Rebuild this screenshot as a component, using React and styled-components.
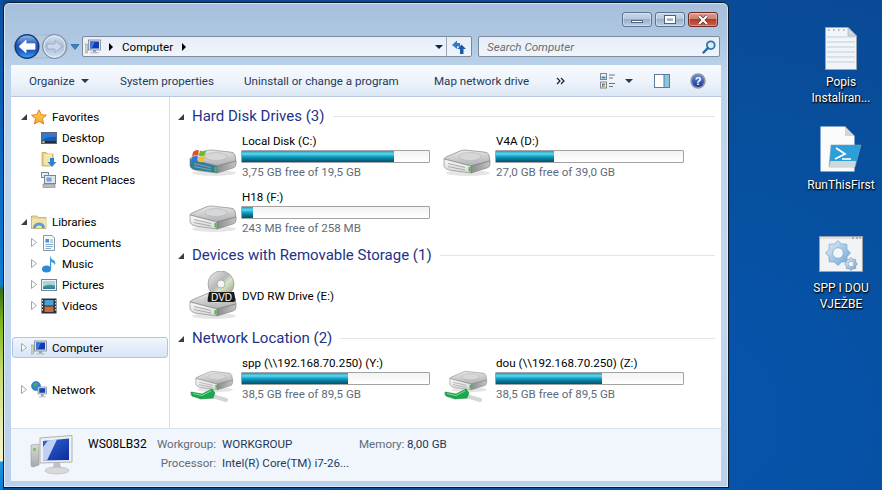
import React from "react";
import styled, { createGlobalStyle } from "styled-components";

const GlobalStyle = createGlobalStyle`
  html, body {
    margin: 0;
    padding: 0;
    height: 100%;
    overflow: hidden;
  }
  body {
    font-family: Roboto, "Noto Sans", sans-serif;
    font-size: 11.6px;
    color: #000;
  }
`;

const Desktop = styled.div`
  width: 882px;
  height: 490px;
  display: flex;
  align-items: flex-start;
  overflow: hidden;
  background:
    linear-gradient(to bottom, #0b4f9f 0, #0a6fc8 200px, #0a7fd4 285px, #356f1c 290px, #7cb518 322px, #c5dc6a 370px, #eef0c0 440px, #f5f2cc 461px, #1a96e0 462px, #0a7cd8 490px) left top / 3px 490px no-repeat,
    radial-gradient(ellipse at 70% 85%, #0655b0 0, #07509f 45%, #0b4690 100%);
`;

const Window = styled.div`
  box-sizing: border-box;
  width: 726px;
  height: 486px;
  margin: 2px 0 0 3px;
  padding: 0 7px 6px;
  display: flex;
  flex-direction: column;
  border: 1px solid #0c1a2c;
  border-radius: 6px 6px 0 0;
  background: linear-gradient(to bottom, #a6bfdc 0, #b0c8e2 40px, #bcd3ec 70px, #c2d7ee 300px, #b9d0ea 100%);
  box-shadow: inset 0 0 0 1px rgba(255, 255, 255, 0.55);
`;

const TitleBar = styled.div`
  display: flex;
  justify-content: flex-end;
  gap: 3px;
  padding: 9px 3px 0 0;
`;

const CaptionButton = styled.div`
  width: 30px;
  height: 15px;
  display: flex;
  align-items: center;
  justify-content: center;
  border: 1px solid ${(p) => (p.$close ? "#6e2a26" : "#5d7390")};
  box-sizing: border-box;
  border-radius: 3px;
  background: ${(p) =>
    p.$close
      ? "linear-gradient(to bottom, #dc9d90 0, #cf7f6f 45%, #b63a2a 50%, #c9604c 100%)"
      : "linear-gradient(to bottom, #c9d8e9 0, #b4c8de 45%, #96afcb 50%, #bcd0e6 100%)"};
  box-shadow: inset 0 0 0 1px rgba(255, 255, 255, 0.35);
`;

const MinGlyph = styled.span`
  width: 10px;
  height: 1px;
  margin-top: 4px;
  background: #fff;
  border: 1px solid #50627a;
`;

const MaxGlyph = styled.span`
  width: 6px;
  height: 3px;
  background: transparent;
  border: 2px solid #fff;
  outline: 1px solid #50627a;
`;

const NavRow = styled.div`
  display: flex;
  align-items: center;
  height: 27px;
  margin: 6px 0 5px;
  padding-left: 2px;
`;

const NavCluster = styled.div`
  width: 69px;
  height: 27px;
  flex: none;
`;

const AddressBar = styled.div`
  width: 390px;
  height: 21px;
  box-sizing: border-box;
  flex: none;
  display: flex;
  align-items: center;
  border: 1px solid #7b8a9c;
  border-radius: 2px;
  background: linear-gradient(to bottom, #e6eef8, #f1f5fb);
`;

const Crumbs = styled.div`
  flex: 1;
  display: flex;
  align-items: center;
  padding-left: 2px;
`;

const CrumbText = styled.span`
  margin: 0 9px 0 9px;
`;

const BlackArrow = styled.span`
  width: 0;
  height: 0;
  margin-left: ${(p) => p.$ml || 0}px;
  border-left: 4px solid #000;
  border-top: 4px solid transparent;
  border-bottom: 4px solid transparent;
`;

const DropArrow = styled.span`
  width: 0;
  height: 0;
  display: inline-block;
  flex: none;
  border-top: 4px solid ${(p) => p.$color || "#1e395b"};
  border-left: 4px solid transparent;
  border-right: 4px solid transparent;
`;

const AddressDrop = styled.div`
  width: 15px;
  display: flex;
  justify-content: center;
`;

const RefreshButton = styled.div`
  width: 24px;
  height: 19px;
  display: flex;
  align-items: center;
  justify-content: center;
  border-left: 1px solid #9aa9bb;
`;

const SearchBox = styled.div`
  width: 242px;
  height: 21px;
  box-sizing: border-box;
  margin-left: 6px;
  padding: 0 2px 0 8px;
  display: flex;
  align-items: center;
  justify-content: space-between;
  border: 1px solid #7b8a9c;
  border-radius: 2px;
  background: linear-gradient(to bottom, #e6eef8, #f1f5fb);
  font-style: italic;
  color: #6d6d6d;
`;

const Toolbar = styled.div`
  height: 32px;
  box-sizing: border-box;
  flex: none;
  display: flex;
  align-items: center;
  padding-left: 18px;
  border-bottom: 1px solid #b9cade;
  background: linear-gradient(to bottom, #f7fafd 0, #eef4fb 50%, #dbe7f4 100%);
  color: #1e395b;
`;

const ToolItem = styled.div`
  display: flex;
  align-items: center;
  gap: 6px;
  flex: none;
  width: ${(p) => p.$w}px;
  white-space: nowrap;
`;

const ToolIcon = styled.div`
  display: flex;
  align-items: center;
  gap: 9px;
  flex: none;
  width: ${(p) => p.$w}px;
`;

const Main = styled.div`
  flex: 1;
  min-height: 0;
  display: flex;
  background: #fff;
`;

const Sidebar = styled.nav`
  width: 159px;
  box-sizing: border-box;
  flex: none;
  padding-top: 9px;
  border-right: 1px solid #d5e0ec;
`;

const TreeGroup = styled.div`
  margin-bottom: 21px;
`;

const TreeRow = styled.div`
  height: 21px;
  box-sizing: border-box;
  display: flex;
  align-items: center;
  gap: 5px;
  margin: 0 1px;
  padding-left: ${(p) => p.$indent || 8}px;
  border: 1px solid ${(p) => (p.$selected ? "#a9c7e8" : "transparent")};
  border-radius: 3px;
  background: ${(p) => (p.$selected ? "linear-gradient(to bottom, #f1f6fd, #d6e5f6)" : "transparent")};
  white-space: nowrap;
`;

const Twisty = styled.span`
  width: 5px;
  height: 8px;
  flex: none;
  display: flex;
  align-items: center;
  justify-content: flex-start;
`;

const OpenTwisty = styled.span`
  width: 0;
  height: 0;
  margin-top: 1px;
  flex: none;
  border-bottom: 6px solid #3c3c3c;
  border-left: 6px solid transparent;
`;

const Content = styled.main`
  flex: 1;
  min-width: 0;
  padding: 9px 6px 0 8px;
`;

const GroupHeader = styled.div`
  height: 20px;
  display: flex;
  align-items: center;
  gap: 8px;
`;

const GroupTitle = styled.span`
  margin-left: 1px;
  font-size: 15px;
  color: #1e3287;
  white-space: nowrap;
`;

const GroupRule = styled.span`
  flex: 1;
  height: 1px;
  background: #e2e6ec;
`;

const Tiles = styled.div`
  display: grid;
  grid-template-columns: 254px 254px;
  grid-auto-rows: 56px;
  margin-left: 11px;
  padding-top: 7px;
`;

const Tile = styled.div`
  display: flex;
  align-items: ${(p) => (p.$center ? "center" : "flex-start")};
  height: ${(p) => (p.$center ? 48 : 56)}px;
`;

const TileIcon = styled.div`
  width: 52px;
  flex: none;
  padding-top: ${(p) => (p.$center ? 0 : 14)}px;
`;

const TileInfo = styled.div`
  width: 189px;
`;

const TileName = styled.div`
  height: 16px;
  line-height: 16px;
  padding-left: 1px;
  white-space: nowrap;
`;

const Meter = styled.div`
  height: 13px;
  box-sizing: border-box;
  margin-top: 1px;
  border: 1px solid #a3a3a3;
  border-radius: 1px;
  background: linear-gradient(to bottom, #f3f3f3, #fff);
`;

const MeterFill = styled.div`
  height: 100%;
  background: linear-gradient(to bottom, #1b9dbf 0, #62d4ee 25%, #14a2c2 50%, #04789a 72%, #0a4f70 100%);
`;

const TileFree = styled.div`
  height: 18px;
  line-height: 18px;
  padding-left: 1px;
  color: #5f6b78;
  white-space: nowrap;
`;

const Details = styled.footer`
  height: 53px;
  box-sizing: border-box;
  flex: none;
  display: flex;
  padding: 5px 0 0 19px;
  border-top: 1px solid #d4e0ee;
  background: #f1f5fc;
`;

const DetailsIcon = styled.div`
  width: 58px;
  flex: none;
  padding-top: 1px;
`;

const DetailsGrid = styled.div`
  display: grid;
  grid-template-columns: 66px 68px 137px 48px auto;
  grid-auto-rows: 19px;
  align-items: center;
  white-space: nowrap;
`;

const DetailName = styled.span`
  font-size: 12px;
  color: #000;
`;

const DetailLabel = styled.span`
  color: #5f6b78;
  justify-self: ${(p) => (p.$end ? "end" : "start")};
  padding-right: ${(p) => (p.$end ? 6 : 0)}px;
`;

const DetailValue = styled.span`
  color: #1e395b;
  grid-column: ${(p) => p.$span || "auto"};
`;

const DesktopIcons = styled.div`
  width: 80px;
  margin-left: 72px;
  padding-top: 27px;
  display: flex;
  flex-direction: column;
  align-items: center;
`;

const Shortcut = styled.div`
  width: 80px;
  height: ${(p) => p.$h}px;
  display: flex;
  flex-direction: column;
  align-items: center;
`;

const ShortcutLabel = styled.div`
  margin-top: ${(p) => p.$gap}px;
  font-size: 12px;
  line-height: 16px;
  text-align: center;
  color: #fff;
  white-space: pre-line;
  text-shadow: 0 1px 2px #000, 1px 1px 1px rgba(0, 0, 0, 0.8);
`;

// ---- icons ----

const NavButtons = () => (
  <svg width="69" height="27" viewBox="0 0 69 27">
    <defs>
      <linearGradient id="backFill" x1="0" y1="0" x2="0" y2="1">
        <stop offset="0" stopColor="#8fb4ea" />
        <stop offset="0.45" stopColor="#1c52b6" />
        <stop offset="0.7" stopColor="#1a5cc4" />
        <stop offset="1" stopColor="#37a0f0" />
      </linearGradient>
      <linearGradient id="fwdFill" x1="0" y1="0" x2="0" y2="1">
        <stop offset="0" stopColor="#d4e0ee" />
        <stop offset="0.5" stopColor="#a9bfda" />
        <stop offset="1" stopColor="#cfe0f2" />
      </linearGradient>
    </defs>
    <rect x="1" y="2" width="54" height="23" rx="11.5" fill="#b7c9df" stroke="#93a9c5" strokeWidth="0.5" />
    <circle cx="14" cy="13.5" r="12.5" fill="#123a78" />
    <circle cx="14" cy="13.5" r="11" fill="url(#backFill)" />
    <path d="M6 13.5 L13 7.2 V10.8 H22 V16.2 H13 V19.8 Z" fill="#fff" stroke="#fff" strokeWidth="0.8" strokeLinejoin="round" />
    <circle cx="41.5" cy="13.5" r="12" fill="url(#fwdFill)" stroke="#74859c" />
    <circle cx="41.5" cy="13.5" r="10.5" fill="none" stroke="#e8f0f8" strokeWidth="0.8" />
    <path d="M49 13.5 L42 7.5 V11 H34 V16 H42 V19.5 Z" fill="#ccd9e8" stroke="#93a6bd" strokeWidth="0.8" strokeLinejoin="round" />
    <path d="M58 11.5 H66 L62 16.5 Z" fill="#2a8ad0" stroke="#1d4f86" strokeWidth="0.6" />
  </svg>
);

const ClosedTriangle = () => (
  <svg width="6" height="9" viewBox="0 0 6 9" style={{ flex: "none" }}>
    <path d="M0.5 0.5 L5.5 4.5 L0.5 8.5 Z" fill="#fff" stroke="#a3a3a3" />
  </svg>
);

const ComputerIcon = () => (
  <svg width="16" height="16" viewBox="0 0 16 16" style={{ flex: "none" }}>
    <rect x="0" y="5" width="2.5" height="9" fill="#cfd6b8" stroke="#8b8f80" strokeWidth="0.5" />
    <rect x="3.5" y="1" width="12" height="10" fill="#dfe3e8" stroke="#7d8794" strokeWidth="0.8" />
    <rect x="5" y="2.5" width="9" height="7" fill="#0d3bb4" />
    <path d="M5 2.5 H10 L7 9.5 H5 Z" fill="#3f74dc" />
    <rect x="8" y="11" width="3" height="2" fill="#9aa3ad" />
    <rect x="5.5" y="13" width="8" height="1.5" fill="#bcc3cb" />
  </svg>
);

const RefreshIcon = () => (
  <svg width="16" height="16" viewBox="0 0 16 16">
    <path d="M1 6 L6 1.5 V4 H9 V7.5 H6 V10 Z" fill="#3b79c4" />
    <path d="M15 10 L10.5 5.5 L6.5 10 H9 V15 H12.5 V10 Z" fill="#1d5aa8" />
  </svg>
);

const SearchIcon = () => (
  <svg width="16" height="16" viewBox="0 0 16 16">
    <circle cx="9.8" cy="6.2" r="3.9" fill="#dcebf8" stroke="#2e73b4" strokeWidth="1.8" />
    <path d="M7 9 L2.5 13.5" stroke="#2466aa" strokeWidth="2.4" strokeLinecap="round" />
  </svg>
);

const ViewsIcon = () => (
  <svg width="16" height="16" viewBox="0 0 16 16" style={{ flex: "none" }}>
    <rect x="0.5" y="0.5" width="6" height="6" fill="#eef4fa" stroke="#7c8794" />
    <rect x="1.5" y="3.5" width="4" height="2" fill="#2e8f9e" />
    <rect x="0.5" y="9" width="6" height="6" fill="#eef4fa" stroke="#7c8794" />
    <rect x="2" y="10.5" width="1.6" height="1.6" fill="#d23b2c" />
    <rect x="3.6" y="10.5" width="1.6" height="1.6" fill="#4ba83c" />
    <rect x="2" y="12.2" width="1.6" height="1.6" fill="#2d64c8" />
    <rect x="3.6" y="12.2" width="1.6" height="1.6" fill="#e6b52c" />
    <path d="M9 2 H15 M9 5 H13 M9 10.5 H15 M9 13.5 H13" stroke="#6b7684" strokeWidth="1" />
  </svg>
);

const PaneIcon = () => (
  <svg width="16" height="14" viewBox="0 0 16 14">
    <rect x="0.5" y="0.5" width="15" height="13" fill="#fff" stroke="#5f7b96" />
    <rect x="10" y="1" width="5" height="12" fill="#8cc6e0" />
    <rect x="9.5" y="1" width="1" height="12" fill="#5f7b96" />
  </svg>
);

const HelpIcon = () => (
  <svg width="16" height="16" viewBox="0 0 16 16">
    <defs>
      <linearGradient id="helpFill" x1="0" y1="0" x2="0" y2="1">
        <stop offset="0" stopColor="#5f88dc" />
        <stop offset="1" stopColor="#17359c" />
      </linearGradient>
    </defs>
    <circle cx="8" cy="8" r="7.7" fill="#8d96a6" />
    <circle cx="8" cy="8" r="6" fill="url(#helpFill)" />
    <text x="8" y="12" textAnchor="middle" fontSize="11" fontWeight="700" fontFamily="Liberation Sans, sans-serif" fill="#fff">?</text>
  </svg>
);

const StarIcon = () => (
  <svg width="16" height="16" viewBox="0 0 16 16" style={{ flex: "none" }}>
    <defs>
      <linearGradient id="starFill" x1="0" y1="0" x2="0" y2="1">
        <stop offset="0" stopColor="#ffd94e" />
        <stop offset="1" stopColor="#f7a72a" />
      </linearGradient>
    </defs>
    <path d="M8 0.8 L10.2 5.6 L15.4 6.2 L11.5 9.7 L12.6 15 L8 12.3 L3.4 15 L4.5 9.7 L0.6 6.2 L5.8 5.6 Z" fill="url(#starFill)" stroke="#d9782a" strokeWidth="0.9" strokeLinejoin="round" />
  </svg>
);

const DesktopIcon = () => (
  <svg width="16" height="16" viewBox="0 0 16 16" style={{ flex: "none" }}>
    <rect x="0.5" y="2.5" width="15" height="11" fill="#1f5aa8" stroke="#59687a" />
    <path d="M1 3 H15 V7 Q8 6 1 10 Z" fill="#2f7ad0" />
    <rect x="1" y="11" width="14" height="2" fill="#26303c" />
    <rect x="1.5" y="11" width="2" height="2" fill="#d9d24a" />
  </svg>
);

const DownloadsIcon = () => (
  <svg width="16" height="16" viewBox="0 0 16 16" style={{ flex: "none" }}>
    <path d="M1 1.5 H5 L7 3 H12 V15 H1 Z" fill="#e9cf7c" stroke="#b8a05a" strokeWidth="0.7" />
    <rect x="3" y="3" width="8" height="11" fill="#f5e6ae" />
    <path d="M9 7 H13 V11 H15.5 L11 15.8 L6.5 11 H9 Z" fill="#2c7fd4" />
  </svg>
);

const RecentIcon = () => (
  <svg width="16" height="16" viewBox="0 0 16 16" style={{ flex: "none" }}>
    <rect x="0.5" y="0.5" width="7" height="5" fill="#e8ecf0" stroke="#7b8592" />
    <rect x="3.5" y="3.5" width="11" height="8" fill="#dfe5ea" stroke="#7b8592" />
    <rect x="5.5" y="5.5" width="5" height="4" fill="#6ea4d8" />
    <rect x="2" y="12" width="12" height="3.5" fill="#b6bdc4" stroke="#7b8592" strokeWidth="0.6" />
  </svg>
);

const LibraryIcon = () => (
  <svg width="16" height="16" viewBox="0 0 16 16" style={{ flex: "none" }}>
    <path d="M0.5 2 H6 L7.5 3.5 H15 V14.5 H0.5 Z" fill="#ead692" stroke="#b39e62" strokeWidth="0.7" />
    <rect x="1" y="5" width="14" height="9" fill="#f3e4ae" />
    <path d="M2 14 Q2 9 8 8.5 Q14 9 14 14 H11 Q11 11.5 8 11.5 Q5 11.5 5 14 Z" fill="#5a9fd2" />
  </svg>
);

const DocumentsIcon = () => (
  <svg width="16" height="16" viewBox="0 0 16 16" style={{ flex: "none" }}>
    <path d="M2.5 0.5 H11 L13.5 3 V15.5 H2.5 Z" fill="#f5f8fb" stroke="#8b97a4" />
    <rect x="4.5" y="4" width="3.5" height="3.5" fill="#4d8ed0" />
    <path d="M9 5 H12 M9 7 H12 M4.5 9.5 H12 M4.5 11.5 H12 M4.5 13.5 H10" stroke="#7ea4c8" strokeWidth="0.9" />
  </svg>
);

const MusicIcon = () => (
  <svg width="16" height="18" viewBox="0 0 16 18" style={{ flex: "none" }}>
    <ellipse cx="5.5" cy="14" rx="4.5" ry="3.5" fill="#2c8ad6" />
    <path d="M9 14 V1 Q10 4 13 5.5 Q15 7 14 10 Q13 7.5 10.2 7 V14 Z" fill="#3f9be0" />
  </svg>
);

const PicturesIcon = () => (
  <svg width="16" height="16" viewBox="0 0 16 16" style={{ flex: "none" }}>
    <rect x="0.5" y="2.5" width="15" height="11" fill="#f0f3f6" stroke="#7b8592" />
    <rect x="2" y="4" width="12" height="8" fill="#a8d4ea" />
    <path d="M2 9.5 Q7 6.5 14 8.5 V12 H2 Z" fill="#3f9a84" />
    <rect x="2" y="10.5" width="12" height="1.5" fill="#2f7ea4" />
  </svg>
);

const VideosIcon = () => (
  <svg width="16" height="16" viewBox="0 0 16 16" style={{ flex: "none" }}>
    <rect x="0.5" y="0.5" width="15" height="15" fill="#28323c" />
    <rect x="3.5" y="2" width="9" height="5.5" fill="#4aa0d8" />
    <rect x="3.5" y="8.5" width="9" height="5.5" fill="#c96a3a" />
    <path d="M1.5 2 V14 M14.5 2 V14" stroke="#cfd6dc" strokeWidth="1.2" strokeDasharray="1.4 1.6" />
  </svg>
);

const NetworkIcon = () => (
  <svg width="16" height="17" viewBox="0 0 16 17" style={{ flex: "none" }}>
    <circle cx="5" cy="5" r="4.5" fill="#2e86d8" stroke="#1a5a9c" strokeWidth="0.5" />
    <path d="M2.2 3 Q4 1 6 2 L5.5 4.5 L3 6 Z M6 6 L8.5 6 L7 9 Z" fill="#4fb04a" />
    <rect x="7" y="6" width="8.5" height="7" fill="#e3e7eb" stroke="#7d8794" strokeWidth="0.7" />
    <rect x="8.2" y="7.2" width="6" height="4.6" fill="#1542b4" />
    <rect x="10" y="13" width="2.5" height="2" fill="#9aa3ad" />
    <rect x="8" y="15" width="6.5" height="1.4" fill="#bcc3cb" />
  </svg>
);

const DriveBody = ({ id, x = 0, y = 0, scale = 1, front }) => (
  <g transform={`translate(${x} ${y}) scale(${scale})`}>
    <defs>
      <linearGradient id={`${id}Top`} x1="0" y1="0" x2="0.2" y2="1">
        <stop offset="0" stopColor="#ececec" />
        <stop offset="1" stopColor="#b4b5b6" />
      </linearGradient>
      <linearGradient id={`${id}Front`} x1="0" y1="0" x2="0" y2="1">
        <stop offset="0" stopColor="#fafafa" />
        <stop offset="1" stopColor="#d6d7d8" />
      </linearGradient>
      <linearGradient id={`${id}Side`} x1="0" y1="0" x2="1" y2="0">
        <stop offset="0" stopColor="#8a8b8c" />
        <stop offset="1" stopColor="#c2c3c4" />
      </linearGradient>
    </defs>
    <ellipse cx="25" cy="26" rx="22" ry="3" fill="#000" opacity="0.1" />
    <path d="M1 12 Q1 11 3 10 L17 4 Q19 3 22 3 L41 5 Q45 5 46 8 L47 14 L28 19 Z" fill={`url(#${id}Top)`} stroke="#77787a" strokeWidth="0.6" strokeLinejoin="round" />
    <ellipse cx="27" cy="9.5" rx="11" ry="4" fill="#d6d7d8" stroke="#a9aaab" strokeWidth="0.4" />
    <path d="M1 12 L28 19 V26 L6 23 Q2 22 1 19 Z" fill={front || `url(#${id}Front)`} stroke="#7c7d80" strokeWidth="0.6" strokeLinejoin="round" />
    <path d="M28 19 L47 14 V17 Q47 20 44 21 L28 26 Z" fill={`url(#${id}Side)`} stroke="#77787a" strokeWidth="0.6" strokeLinejoin="round" />
    <path d="M5 16.5 L22 20.5 M5 19.5 L22 23" stroke="#a2a3a4" strokeWidth="0.9" />
    <rect x="25.5" y="20" width="2" height="4.5" fill="#4cc23a" />
  </g>
);

const WinBadge = () => (
  <g transform="translate(2 -7)">
    <path d="M2 12 Q5 9 8 10.5 L7 15.5 Q4 14 1 16.5 Z" fill="#e2522a" />
    <path d="M9 10.5 Q12 12 15 10 L14 15 Q11 17 8 15.5 Z" fill="#6cb82e" />
    <path d="M1 17.5 Q4 15 7 16.5 L6 21.5 Q3 20 0 22.5 Z" fill="#2e7ad8" />
    <path d="M8 16.5 Q11 18 14 16 L13 21 Q10 23 7 21.5 Z" fill="#f0bf2a" />
  </g>
);

const SystemDrive = () => (
  <svg width="48" height="32" viewBox="0 0 48 32">
    <DriveBody id="cDrive" front="#2b7f9e" />
    <WinBadge />
  </svg>
);

const PlainDrive = ({ id }) => (
  <svg width="48" height="32" viewBox="0 0 48 32">
    <DriveBody id={id} />
  </svg>
);

const DvdDrive = () => (
  <svg width="48" height="48" viewBox="0 0 48 48">
    <defs>
      <linearGradient id="discFill" x1="0" y1="0" x2="1" y2="1">
        <stop offset="0" stopColor="#eeeeee" />
        <stop offset="0.45" stopColor="#b7b7b7" />
        <stop offset="0.6" stopColor="#d6e6c4" />
        <stop offset="1" stopColor="#8c8c8c" />
      </linearGradient>
    </defs>
    <DriveBody id="dvdDrive" y={19} />
    <circle cx="32" cy="13" r="13" fill="url(#discFill)" stroke="#8a8a8a" strokeWidth="0.6" />
    <circle cx="32" cy="13" r="4" fill="#f4f4f4" stroke="#8a8a8a" strokeWidth="0.6" />
    <path d="M20 21 H45 L46.5 29 Q46.5 31 44 31 L20 31 Q18.5 31 18.5 29 Z" fill="#1a1a1a" />
    <text x="32.5" y="30" textAnchor="middle" fontSize="10" fontFamily="Liberation Sans, sans-serif" fill="#fff">DVD</text>
  </svg>
);

const NetDrive = ({ id }) => (
  <svg width="48" height="36" viewBox="0 0 48 36">
    <DriveBody id={id} x={6} y={0} scale={0.8} />
    <path d="M3 25 L14 27 L27 28 L37 31" stroke="#cfd8d2" strokeWidth="4" strokeLinecap="round" fill="none" />
    <path d="M2 23 L13 25 L23 20 L26 24 L24 29 L12 30 L3 27 Z" fill="#1ba94e" stroke="#0f7a38" strokeWidth="0.5" />
    <path d="M4 24.5 L13 26.5 L22 22" stroke="#7be08f" strokeWidth="1" fill="none" />
  </svg>
);

const LargeComputer = () => (
  <svg width="44" height="40" viewBox="0 0 44 40">
    <defs>
      <linearGradient id="pcScreen" x1="0" y1="0" x2="1" y2="1">
        <stop offset="0" stopColor="#3168d8" />
        <stop offset="1" stopColor="#0a2a9c" />
      </linearGradient>
      <linearGradient id="pcTower" x1="0" y1="0" x2="0" y2="1">
        <stop offset="0" stopColor="#d9dadb" />
        <stop offset="1" stopColor="#a6a8aa" />
      </linearGradient>
    </defs>
    <path d="M1 10 L9 9 V30 L3 32 Q1 32 1 30 Z" fill="url(#pcTower)" stroke="#8e9092" strokeWidth="0.5" />
    <rect x="3" y="13" width="3" height="3" fill="#8bc65a" />
    <path d="M10 3 L42 0.5 V27 L10 28 Z" fill="#eef0f2" stroke="#9ea1a4" strokeWidth="0.8" />
    <path d="M13 6 L39 3.5 V25 L13 25.5 Z" fill="url(#pcScreen)" />
    <path d="M18 5.5 L27 4.6 L17 25.4 H13 V12 Z" fill="#dbe6fb" opacity="0.85" />
    <path d="M24 28 H30 L31 33 H23 Z" fill="#bfc2c5" />
    <ellipse cx="27" cy="35.5" rx="12" ry="3.5" fill="#d7d9db" stroke="#a8abad" strokeWidth="0.5" />
  </svg>
);

const TextFileIcon = () => (
  <svg width="32" height="43" viewBox="0 0 32 43">
    <path d="M0.5 0.5 H23 L31.5 9 V42.5 H0.5 Z" fill="#f1f4f8" stroke="#9aa3ae" />
    <path d="M23 0.5 V9 H31.5 Z" fill="#d4d9df" stroke="#9aa3ae" strokeWidth="0.6" />
    <path d="M3 3 H22" stroke="#a2a8b0" strokeWidth="1.6" strokeDasharray="1.6 3.4" />
    <path d="M2 10 H30 M2 15 H30 M2 20 H30 M2 25 H30 M2 30 H30 M2 35 H30" stroke="#c3cddc" strokeWidth="1" />
  </svg>
);

const PowerShellIcon = () => (
  <svg width="42" height="46" viewBox="0 0 42 46">
    <path d="M0.5 0.5 H25 L34.5 10 V45.5 H0.5 Z" fill="#fbfbfb" />
    <path d="M25 0.5 V10 H34.5 Z" fill="#d3d5d8" />
    <path d="M11 19 H41 L35 41 H9 Z" fill="#2c9fd8" stroke="#8ba0b0" strokeWidth="0.6" />
    <path d="M10.5 35 H36 L35 41 H9 Z" fill="#cfd7de" />
    <path d="M16 22 L25 28 L15 33" stroke="#fff" strokeWidth="1.8" fill="none" />
    <path d="M22 33 H31" stroke="#fff" strokeWidth="1.6" />
  </svg>
);

const GearPath = ({ cx, cy, r, fill }) => {
  const pts = [];
  for (let i = 0; i < 16; i++) {
    const a = (i / 16) * Math.PI * 2;
    const rad = i % 2 === 0 ? r : r * 0.78;
    pts.push(`${(cx + Math.cos(a) * rad).toFixed(1)},${(cy + Math.sin(a) * rad).toFixed(1)}`);
  }
  return (
    <g>
      <polygon points={pts.join(" ")} fill={fill} stroke="#6d93b8" strokeWidth="0.6" strokeLinejoin="round" />
      <circle cx={cx} cy={cy} r={r * 0.42} fill="#f4f6f8" stroke="#7d9cba" strokeWidth="0.6" />
    </g>
  );
};

const GearAppIcon = () => (
  <svg width="44" height="36" viewBox="0 0 44 36">
    <defs>
      <linearGradient id="gearFill" x1="0" y1="0" x2="1" y2="1">
        <stop offset="0" stopColor="#e3f0fb" />
        <stop offset="1" stopColor="#6ea3d6" />
      </linearGradient>
    </defs>
    <rect x="0.5" y="0.5" width="43" height="35" fill="#f2f3f4" stroke="#9aa0a6" />
    <rect x="1" y="1" width="42" height="2" fill="#dfe2e5" />
    <path d="M33 2 H35 M37 2 H39 M40.5 2 H42" stroke="#777" strokeWidth="1" />
    <GearPath cx={19} cy={17} r={12.5} fill="url(#gearFill)" />
    <GearPath cx={32} cy={28} r={6.5} fill="url(#gearFill)" />
  </svg>
);

const Twist = ({ open }) => <Twisty>{open ? <OpenTwisty /> : <ClosedTriangle />}</Twisty>;

const favorites = [
  ["Desktop", <DesktopIcon key="d" />],
  ["Downloads", <DownloadsIcon key="dl" />],
  ["Recent Places", <RecentIcon key="r" />],
];

const libraries = [
  ["Documents", <DocumentsIcon key="doc" />],
  ["Music", <MusicIcon key="m" />],
  ["Pictures", <PicturesIcon key="p" />],
  ["Videos", <VideosIcon key="v" />],
];

const DriveTile = ({ icon, name, free, used }) => (
  <Tile>
    <TileIcon>{icon}</TileIcon>
    <TileInfo>
      <TileName>{name}</TileName>
      <Meter>
        <MeterFill style={{ width: `${used}%` }} />
      </Meter>
      <TileFree>{free}</TileFree>
    </TileInfo>
  </Tile>
);

const Group = ({ title }) => (
  <GroupHeader>
    <Twist open />
    <GroupTitle>{title}</GroupTitle>
    <GroupRule />
  </GroupHeader>
);

export default function App() {
  return (
    <>
      <GlobalStyle />
      <Desktop>
        <Window>
          <TitleBar>
            <CaptionButton>
              <MinGlyph />
            </CaptionButton>
            <CaptionButton>
              <MaxGlyph />
            </CaptionButton>
            <CaptionButton $close>
              <svg width="12" height="10" viewBox="0 0 12 10">
                <path d="M2 1 L10 9 M10 1 L2 9" stroke="#4a2a28" strokeWidth="3.4" />
                <path d="M2 1 L10 9 M10 1 L2 9" stroke="#fff" strokeWidth="2.2" />
              </svg>
            </CaptionButton>
          </TitleBar>

          <NavRow>
            <NavCluster>
              <NavButtons />
            </NavCluster>
            <AddressBar>
              <Crumbs>
                <ComputerIcon />
                <BlackArrow $ml={8} />
                <CrumbText>Computer</CrumbText>
                <BlackArrow />
              </Crumbs>
              <AddressDrop>
                <DropArrow $color="#14213c" />
              </AddressDrop>
              <RefreshButton>
                <RefreshIcon />
              </RefreshButton>
            </AddressBar>
            <SearchBox>
              <span>Search Computer</span>
              <SearchIcon />
            </SearchBox>
          </NavRow>

          <Toolbar>
            <ToolItem $w={91}>
              Organize <DropArrow />
            </ToolItem>
            <ToolItem $w={124}>System properties</ToolItem>
            <ToolItem $w={190}>Uninstall or change a program</ToolItem>
            <ToolItem $w={122}>Map network drive</ToolItem>
            <ToolItem $w={44}>
              <svg width="9" height="8" viewBox="0 0 9 8">
                <path d="M1 1 L4 4 L1 7 M5 1 L8 4 L5 7" stroke="#14213c" strokeWidth="1.2" fill="none" />
              </svg>
            </ToolItem>
            <ToolIcon $w={54}>
              <ViewsIcon />
              <DropArrow />
            </ToolIcon>
            <ToolIcon $w={36}>
              <PaneIcon />
            </ToolIcon>
            <ToolIcon $w={16}>
              <HelpIcon />
            </ToolIcon>
          </Toolbar>

          <Main>
            <Sidebar>
              <TreeGroup>
                <TreeRow>
                  <Twist open />
                  <StarIcon />
                  <span>Favorites</span>
                </TreeRow>
                {favorites.map(([label, icon]) => (
                  <TreeRow $indent={28} key={label}>
                    {icon}
                    <span>{label}</span>
                  </TreeRow>
                ))}
              </TreeGroup>
              <TreeGroup>
                <TreeRow>
                  <Twist open />
                  <LibraryIcon />
                  <span>Libraries</span>
                </TreeRow>
                {libraries.map(([label, icon]) => (
                  <TreeRow $indent={18} key={label}>
                    <Twist />
                    {icon}
                    <span>{label}</span>
                  </TreeRow>
                ))}
              </TreeGroup>
              <TreeGroup>
                <TreeRow $selected>
                  <Twist />
                  <ComputerIcon />
                  <span>Computer</span>
                </TreeRow>
              </TreeGroup>
              <TreeGroup>
                <TreeRow>
                  <Twist />
                  <NetworkIcon />
                  <span>Network</span>
                </TreeRow>
              </TreeGroup>
            </Sidebar>

            <Content>
              <Group title="Hard Disk Drives (3)" />
              <Tiles>
                <DriveTile icon={<SystemDrive />} name="Local Disk (C:)" free="3,75 GB free of 19,5 GB" used={81.5} />
                <DriveTile icon={<PlainDrive id="dDrive" />} name="V4A (D:)" free="27,0 GB free of 39,0 GB" used={31} />
                <DriveTile icon={<PlainDrive id="fDrive" />} name="H18 (F:)" free="243 MB free of 258 MB" used={6} />
              </Tiles>
              <Group title="Devices with Removable Storage (1)" />
              <Tiles>
                <Tile $center>
                  <TileIcon $center>
                    <DvdDrive />
                  </TileIcon>
                  <TileName>DVD RW Drive (E:)</TileName>
                </Tile>
              </Tiles>
              <Group title="Network Location (2)" />
              <Tiles>
                <DriveTile icon={<NetDrive id="yDrive" />} name="spp (\\192.168.70.250) (Y:)" free="38,5 GB free of 89,5 GB" used={56.7} />
                <DriveTile icon={<NetDrive id="zDrive" />} name="dou (\\192.168.70.250) (Z:)" free="38,5 GB free of 89,5 GB" used={56.7} />
              </Tiles>
            </Content>
          </Main>

          <Details>
            <DetailsIcon>
              <LargeComputer />
            </DetailsIcon>
            <DetailsGrid>
              <DetailName>WS08LB32</DetailName>
              <DetailLabel $end>Workgroup:</DetailLabel>
              <DetailValue>WORKGROUP</DetailValue>
              <DetailLabel>Memory:</DetailLabel>
              <DetailValue>8,00 GB</DetailValue>
              <span />
              <DetailLabel $end>Processor:</DetailLabel>
              <DetailValue $span="3 / span 3">Intel(R) Core(TM) i7-26...</DetailValue>
            </DetailsGrid>
          </Details>
        </Window>

        <DesktopIcons>
          <Shortcut $h={99}>
            <TextFileIcon />
            <ShortcutLabel $gap={4}>{"Popis\nInstaliran..."}</ShortcutLabel>
          </Shortcut>
          <Shortcut $h={110}>
            <PowerShellIcon />
            <ShortcutLabel $gap={5}>RunThisFirst</ShortcutLabel>
          </Shortcut>
          <Shortcut $h={80}>
            <GearAppIcon />
            <ShortcutLabel $gap={8}>{"SPP I DOU\nVJEŽBE"}</ShortcutLabel>
          </Shortcut>
        </DesktopIcons>
      </Desktop>
    </>
  );
}
